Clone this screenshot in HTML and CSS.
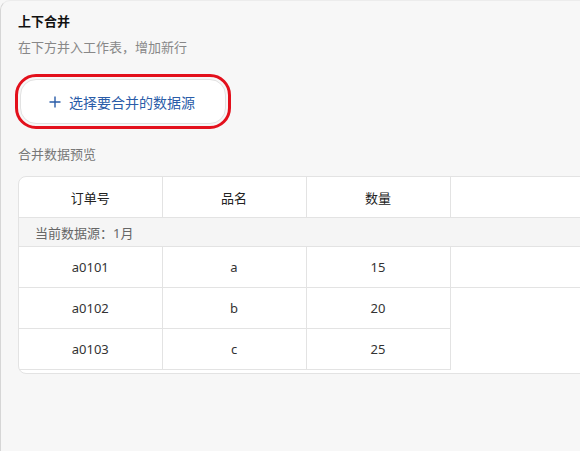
FILE: index.html
```html
<!DOCTYPE html>
<html lang="zh-CN">
<head>
    <meta charset="UTF-8">
    <meta name="viewport" content="width=device-width, initial-scale=1.0">
    <title>上下合并</title>
    <link rel="stylesheet" href="styles.css">
</head>
<body>
    <div class="panel">
        <div class="title">上下合并</div>
        <div class="subtitle">在下方并入工作表，增加新行</div>

        <div class="pick-source">
            <svg class="plus" width="12" height="12" viewBox="0 0 12 12">
                <path d="M6 0.5V11.5M0.5 6H11.5" stroke="currentColor" stroke-width="1.4" fill="none"/>
            </svg>
            <span>选择要合并的数据源</span>
        </div>

        <div class="section-label">合并数据预览</div>

        <div class="preview">
            <table class="preview-table">
                <colgroup>
                    <col class="col first">
                    <col class="col">
                    <col class="col">
                    <col>
                </colgroup>
                <thead>
                    <tr>
                        <th>订单号</th>
                        <th>品名</th>
                        <th>数量</th>
                        <th class="rest"></th>
                    </tr>
                </thead>
                <tbody>
                    <tr class="group">
                        <td colspan="4">当前数据源：1月</td>
                    </tr>
                    <tr>
                        <td>a0101</td>
                        <td>a</td>
                        <td>15</td>
                        <td class="rest"></td>
                    </tr>
                    <tr>
                        <td>a0102</td>
                        <td>b</td>
                        <td>20</td>
                        <td class="rest blank" rowspan="2"></td>
                    </tr>
                    <tr>
                        <td>a0103</td>
                        <td>c</td>
                        <td>25</td>
                    </tr>
                </tbody>
            </table>
        </div>
    </div>
</body>
</html>
```

FILE: styles.css
```css
html, body {
    margin: 0;
    height: 100%;
    overflow: hidden;
    background-color: #f7f7f7;
    font-family: "Noto Sans", "Noto Sans CJK SC", sans-serif;
}
.panel {
    box-sizing: border-box;
    height: 100%;
    padding: 11px 0 0 17px;
    background-color: #f7f7f7;
    border-left: 1px solid #d6d6d6;
    border-top: 1px solid #ececec;
    border-top-left-radius: 10px;
}
.title {
    font-size: 13px;
    line-height: 20px;
    font-weight: bold;
    color: #111;
    margin-top: -1px;
}
.subtitle {
    margin-top: 6px;
    font-size: 13px;
    line-height: 20px;
    color: #888;
}
.pick-source {
    box-sizing: border-box;
    display: flex;
    align-items: center;
    gap: 8px;
    width: 206px;
    height: 45px;
    margin: 22px 0 0 2px;
    padding-left: 28px;
    background-color: #fff;
    border: 1px solid #e2e2e2;
    border-radius: 16px;
    outline: 3px solid #e3101c;
    outline-offset: 2px;
    color: #2a5ca8;
    font-size: 14px;
    cursor: pointer;
}
.plus {
    flex: none;
}
.section-label {
    margin-top: 20px;
    font-size: 13px;
    line-height: 20px;
    color: #777;
}
.preview {
    margin: 12px -20px 0 0;
    padding-bottom: 3px;
    background-color: #fff;
    border: 1px solid #e3e3e3;
    border-radius: 8px 0 0 8px;
    overflow: hidden;
}
.preview-table {
    width: 100%;
    table-layout: fixed;
    border-collapse: collapse;
    font-size: 13px;
}
.preview-table .col {
    width: 144px;
}
.preview-table .first {
    width: 143px;
}
.preview-table th,
.preview-table td {
    height: 40px;
    padding: 0;
    text-align: center;
    border-right: 1px solid #e3e3e3;
    border-bottom: 1px solid #e3e3e3;
}
.preview-table th {
    font-weight: normal;
    color: #222;
}
.preview-table td {
    color: #333;
}
.preview-table .rest {
    border-right: none;
}
.preview-table .blank {
    border-bottom: none;
}
.preview-table .group td {
    height: 28px;
    padding-left: 16px;
    text-align: left;
    color: #666;
    background-color: #f5f5f5;
}
```
